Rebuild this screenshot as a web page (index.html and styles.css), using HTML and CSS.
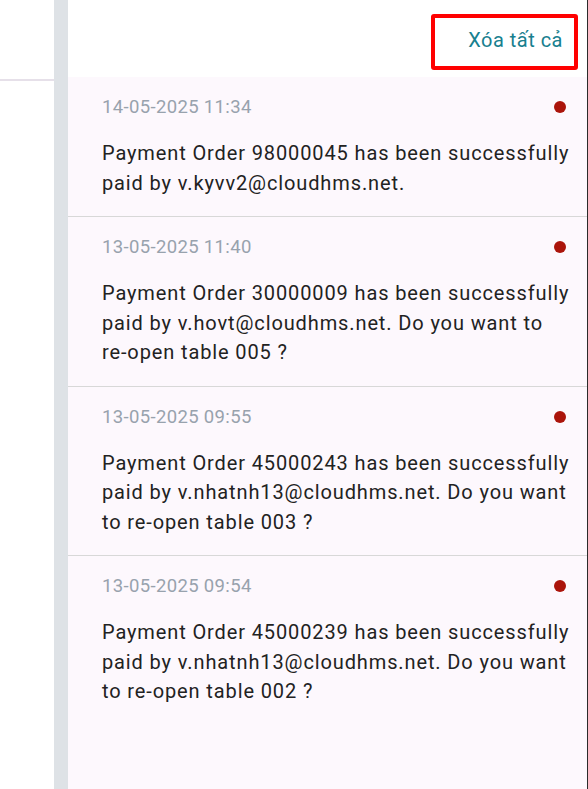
FILE: index.html
```html
<!DOCTYPE html>
<html lang="vi">
<head>
<meta charset="utf-8">
<title>Notifications</title>
<link rel="stylesheet" href="styles.css">
</head>
<body>
<div class="page">
  <aside class="side">
    <div class="side-top"></div>
  </aside>
  <div class="gutter"></div>
  <section class="panel">
    <header class="panel-header">
      <button class="clear-btn" type="button">Xóa tất cả</button>
    </header>
    <ul class="list">
      <li class="item">
        <div class="item-head"><span class="date">14-05-2025 11:34</span><span class="dot"></span></div>
        <p class="msg">Payment Order 98000045 has been successfully paid by v.kyvv2@cloudhms.net.</p>
      </li>
      <li class="item">
        <div class="item-head"><span class="date">13-05-2025 11:40</span><span class="dot"></span></div>
        <p class="msg">Payment Order 30000009 has been successfully paid by v.hovt@cloudhms.net. Do you want to re&#8288;-&#8288;open table 005 ?</p>
      </li>
      <li class="item">
        <div class="item-head"><span class="date">13-05-2025 09:55</span><span class="dot"></span></div>
        <p class="msg">Payment Order 45000243 has been successfully paid by v.nhatnh13@cloudhms.net. Do you want to re&#8288;-&#8288;open table 003 ?</p>
      </li>
      <li class="item">
        <div class="item-head"><span class="date">13-05-2025 09:54</span><span class="dot"></span></div>
        <p class="msg">Payment Order 45000239 has been successfully paid by v.nhatnh13@cloudhms.net. Do you want to re&#8288;-&#8288;open table 002 ?</p>
      </li>
    </ul>
  </section>
</div>
</body>
</html>
```
FILE: styles.css
```css
* { box-sizing: border-box; }
html, body { margin: 0; padding: 0; }
body {
  font-family: Roboto, "Noto Sans", Arial, sans-serif;
  background: #ffffff;
}
.page {
  display: flex;
  height: 789px;
  width: 588px;
  overflow: hidden;
}
.side {
  width: 54px;
  flex: none;
  background: #ffffff;
}
.side-top {
  height: 81px;
  border-bottom: 2px solid #e6e0e9;
}
.gutter {
  width: 14px;
  flex: none;
  background: #dee2e6;
}
.panel {
  flex: 1;
  display: flex;
  flex-direction: column;
  background: #fdf8fd;
  border-right: 1px solid #2b2b2b;
}
.panel-header {
  height: 77px;
  flex: none;
  background: #ffffff;
  display: flex;
  justify-content: flex-end;
  align-items: flex-start;
  padding: 14px 9px 0 0;
}
.clear-btn {
  height: 56px;
  width: 147px;
  border: 4px solid #ff0000;
  border-radius: 3px;
  background: transparent;
  font-family: inherit;
  font-size: 20px;
  line-height: 24px;
  color: #18808f;
  text-align: right;
  letter-spacing: 0.5px;
  padding: 0 11px 4px 0;
  cursor: pointer;
}
.list {
  list-style: none;
  margin: 0;
  padding: 0;
}
.item {
  padding: 17px 11px 18px 34px;
  border-bottom: 1px solid #d8d8d8;
}
.item:last-child { border-bottom: none; }
.item-head {
  display: flex;
  justify-content: space-between;
  align-items: center;
  height: 26px;
}
.date {
  font-size: 18.5px;
  color: #98a2ad;
  letter-spacing: 0.35px;
}
.dot {
  width: 12px;
  height: 12px;
  border-radius: 50%;
  background: #ab140b;
  margin-right: 10px;
}
.msg {
  margin: 19px 0 0 0;
  font-size: 20px;
  line-height: 29.5px;
  color: #222222;
  letter-spacing: 0.88px;
}
```
